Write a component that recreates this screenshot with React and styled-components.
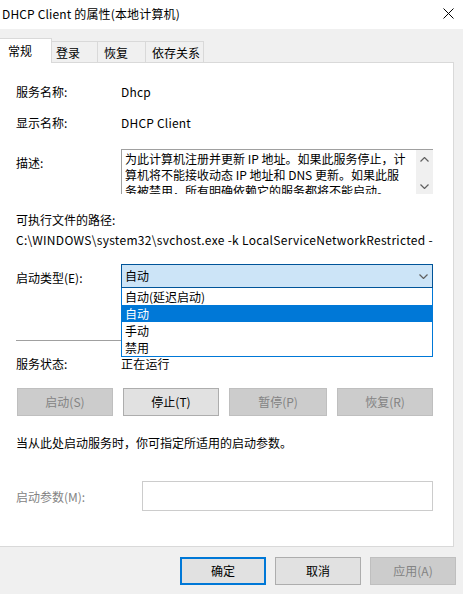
import React from "react";
import styled, { createGlobalStyle } from "styled-components";

const Global = createGlobalStyle`
  html, body { margin: 0; padding: 0; background: #f0f0f0; }
  body {
    font-family: "Noto Sans CJK SC", "Noto Sans", sans-serif;
    font-size: 12px;
    color: #000;
  }
  * { box-sizing: border-box; }
`;

const Window = styled.div`
  width: 463px;
  height: 594px;
  display: flex;
  flex-direction: column;
  background: #f0f0f0;
  overflow: hidden;
`;

const TitleBar = styled.div`
  height: 29px;
  background: #fff;
  display: flex;
  align-items: center;
  justify-content: space-between;
  padding-left: 2px;
`;

const TitleText = styled.div`
  line-height: 16px;
  margin-top: -2px;
  letter-spacing: 0.15px;
`;

const CloseBox = styled.div`
  width: 30px;
  height: 29px;
  display: flex;
  align-items: center;
  justify-content: center;
  margin-top: -3px;
`;

const TabStrip = styled.div`
  height: 34px;
  margin-bottom: -1px;
  display: flex;
  align-items: flex-end;
  position: relative;
  z-index: 1;
`;

const Tab = styled.div`
  width: ${(p) => p.$w}px;
  height: ${(p) => (p.$active ? 25 : 21)}px;
  margin-bottom: ${(p) => (p.$active ? 0 : 1)}px;
  padding-left: ${(p) => p.$pl}px;
  padding-top: ${(p) => (p.$active ? 4 : 3)}px;
  line-height: 16px;
  background: ${(p) => (p.$active ? "#fff" : "#f0f0f0")};
  border-top: 1px solid #d9d9d9;
  border-right: 1px solid #d9d9d9;
  white-space: nowrap;
`;

const Panel = styled.div`
  width: 454px;
  height: 485px;
  background: #fff;
  border-top: 1px solid #d9d9d9;
  border-right: 1px solid #d9d9d9;
  border-bottom: 1px solid #d9d9d9;
  padding: 21px 20px 0 16px;
  display: flex;
  flex-direction: column;
`;

const Field = styled.div`
  display: grid;
  grid-template-columns: ${(p) => p.$label || 105}px 1fr;
  margin-top: ${(p) => p.$mt || 0}px;
  line-height: 16px;
`;

const Label = styled.div`
  line-height: 16px;
  padding-top: ${(p) => p.$pt || 0}px;
  color: ${(p) => (p.$muted ? "#838383" : "#000")};
  white-space: nowrap;
`;

const Value = styled.div`
  line-height: 16px;
  white-space: nowrap;
  letter-spacing: 0.2px;
`;

const Line = styled.div`
  margin-top: ${(p) => p.$mt || 0}px;
  line-height: 16px;
  white-space: nowrap;
  overflow: hidden;
  letter-spacing: ${(p) => p.$ls || 0}px;
`;

const DescBox = styled.div`
  height: 45px;
  display: flex;
  border-top: 1px solid #a0a0a0;
  border-left: 1px solid #a0a0a0;
  overflow: hidden;
`;

const DescText = styled.div`
  flex: 1;
  padding: 1px 0 0 3px;
  line-height: 16px;
  white-space: pre;
`;

const ScrollBar = styled.div`
  width: 17px;
  background: #f0f0f0;
  display: flex;
  flex-direction: column;
  align-items: center;
  justify-content: space-between;
  padding: 7px 0 5px;
`;

const ComboWrap = styled.div`
  position: relative;
  z-index: 2;
`;

const Combo = styled.div`
  height: 24px;
  background: #cce4f7;
  border: 1px solid #005499;
  display: flex;
  align-items: center;
  justify-content: space-between;
  padding: 0 4px 0 3px;
  line-height: 16px;
`;

const DropList = styled.div`
  position: absolute;
  top: 24px;
  left: 0;
  right: 0;
  background: #fff;
  border: 1px solid #0078d7;
  border-top: none;
`;

const Option = styled.div`
  height: 17px;
  line-height: 17px;
  padding-left: 3px;
  background: ${(p) => (p.$selected ? "#0078d7" : "#fff")};
  color: ${(p) => (p.$selected ? "#fff" : "#000")};
`;

const Separator = styled.div`
  margin-top: ${(p) => p.$mt}px;
  height: 1px;
  background: #a0a0a0;
`;

const ButtonRow = styled.div`
  display: flex;
  justify-content: space-between;
  margin-top: ${(p) => p.$mt || 0}px;
  padding-left: 1px;
`;

const Button = styled.div`
  width: ${(p) => p.$w}px;
  height: ${(p) => p.$h || 28}px;
  display: flex;
  align-items: center;
  justify-content: center;
  line-height: 16px;
  background: ${(p) => (p.$disabled ? "#cccccc" : "#e1e1e1")};
  color: ${(p) => (p.$disabled ? "#838383" : "#000")};
  border: ${(p) =>
    p.$default ? "2px solid #0078d7" : p.$disabled ? "1px solid #bfbfbf" : "1px solid #adadad"};
  white-space: nowrap;
`;

const ParamInput = styled.div`
  height: 30px;
  border: 1px solid #cccccc;
  background: #fff;
`;

const Footer = styled.div`
  flex: 1;
  display: flex;
  justify-content: flex-end;
  align-items: flex-start;
  padding: 10px 7px 0 0;
  gap: 9px;
`;

const Chevron = ({ up }) => (
  <svg width="9" height="5" viewBox="0 0 9 5">
    <path
      d={up ? "M0.5 4.5 L4.5 0.5 L8.5 4.5" : "M0.5 0.5 L4.5 4.5 L8.5 0.5"}
      fill="none"
      stroke="#606060"
      strokeWidth="1.2"
    />
  </svg>
);

export default function App() {
  return (
    <Window>
      <Global />
      <TitleBar>
        <TitleText>DHCP Client 的属性(本地计算机)</TitleText>
        <CloseBox>
          <svg width="11" height="11" viewBox="0 0 11 11">
            <path d="M0.5 0.5 L10.5 10.5 M10.5 0.5 L0.5 10.5" stroke="#000" strokeWidth="1" />
          </svg>
        </CloseBox>
      </TitleBar>

      <TabStrip>
        <Tab $active $w={52} $pl={8}>常规</Tab>
        <Tab $w={46} $pl={4}>登录</Tab>
        <Tab $w={48} $pl={6}>恢复</Tab>
        <Tab $w={58} $pl={6}>依存关系</Tab>
      </TabStrip>

      <Panel>
        <Field>
          <Label>服务名称:</Label>
          <Value>Dhcp</Value>
        </Field>
        <Field $mt={15}>
          <Label>显示名称:</Label>
          <Value>DHCP Client</Value>
        </Field>
        <Field $mt={18}>
          <Label $pt={6}>描述:</Label>
          <DescBox>
            <DescText>
              {"为此计算机注册并更新 IP 地址。如果此服务停止，计\n算机将不能接收动态 IP 地址和 DNS 更新。如果此服\n务被禁用，所有明确依赖它的服务都将不能启动。"}
            </DescText>
            <ScrollBar>
              <Chevron up />
              <Chevron />
            </ScrollBar>
          </DescBox>
        </Field>
        <Line $mt={18}>可执行文件的路径:</Line>
        <Line $mt={4} $ls={0.3}>{"C:\\WINDOWS\\system32\\svchost.exe -k LocalServiceNetworkRestricted -p"}</Line>
        <Field $mt={16}>
          <Label $pt={6}>启动类型(E):</Label>
          <ComboWrap>
            <Combo>
              <span>自动</span>
              <Chevron />
            </Combo>
            <DropList>
              <Option>自动(延迟启动)</Option>
              <Option $selected>自动</Option>
              <Option>手动</Option>
              <Option>禁用</Option>
            </DropList>
          </ComboWrap>
        </Field>
        <Separator $mt={52} />
        <Field $mt={15}>
          <Label>服务状态:</Label>
          <Value>正在运行</Value>
        </Field>
        <ButtonRow $mt={16}>
          <Button $w={96} $disabled>启动(S)</Button>
          <Button $w={96}>停止(T)</Button>
          <Button $w={98} $disabled>暂停(P)</Button>
          <Button $w={96} $disabled>恢复(R)</Button>
        </ButtonRow>
        <Line $mt={19}>当从此处启动服务时，你可指定所适用的启动参数。</Line>
        <Field $mt={30} $label={126}>
          <Label $pt={8} $muted>启动参数(M):</Label>
          <ParamInput />
        </Field>
      </Panel>

      <Footer>
        <Button $w={86} $h={28} $default>确定</Button>
        <Button $w={86} $h={28}>取消</Button>
        <Button $w={86} $h={28} $disabled>应用(A)</Button>
      </Footer>
    </Window>
  );
}
